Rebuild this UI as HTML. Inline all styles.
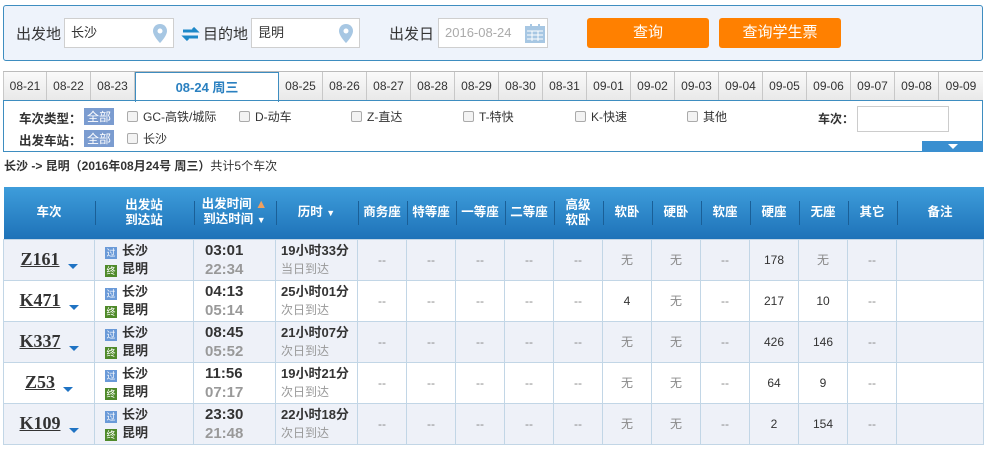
<!DOCTYPE html>
<html><head><meta charset="utf-8"><style>
*{box-sizing:border-box;margin:0;padding:0}
body{width:988px;height:449px;background:#fff;font-family:"Liberation Sans","Noto Sans CJK SC",sans-serif;font-size:12px;color:#333;position:relative;overflow:hidden}
.a{position:absolute}
.top{left:3px;top:5px;width:980px;height:56px;background:#eef3fb;border:1px solid #3e8dc0;border-radius:3px}
.lbl{font-size:15px;color:#333;top:23px}
.inp{top:18px;height:30px;background:#fff;border:1px solid #cfcfcf;font-size:13px;padding:0 6px;line-height:28px}
.btn{top:18px;height:30px;background:#ff8000;border-radius:3px;color:#fff;font-size:15px;text-align:center;line-height:30px}
.tabs{left:3px;top:71px;height:30px;width:980px;border-top:1px solid #bbb}
.tab{position:absolute;top:0;width:44px;height:29px;background:linear-gradient(#fafafa,#e8e8e8);border-right:1px solid #c8c8c8;text-align:center;line-height:29px;font-size:12px;color:#333}
.filt{left:3px;top:100px;width:980px;height:52px;border:1px solid #3e8dc0}
.cb{display:inline-block;width:11px;height:11px;border:1px solid #aaa;border-radius:2px;background:#f3f3f3;vertical-align:-1px;margin-right:5px}
.all{background:#7b9cd0;color:#fff;padding:0 3px;font-size:12px}
table{position:absolute;left:3px;top:187px;width:980px;border-collapse:collapse;table-layout:fixed}
th{height:52px;background:linear-gradient(#3e9ddb,#1e72b8);color:#fff;font-size:12.5px;font-weight:bold;line-height:15px;position:relative}
th .sep{position:absolute;left:0;top:14px;height:24px;width:1px;background:#1a5f97}
td{height:41px;border:1px solid #c2d6e6;text-align:center;font-size:12px;color:#333}
td.g{color:#888}
tr.l td{background:#eef1f8}
.tn{font-family:"Liberation Serif","Noto Serif CJK SC",serif;font-size:18px;font-weight:bold;text-decoration:underline;color:#333}
.dn{display:inline-block;width:0;height:0;border-left:5px solid transparent;border-right:5px solid transparent;border-top:5px solid #1f73c3;margin-left:8px;vertical-align:-4px}
.st{text-align:left;padding-left:10px;font-size:13px;font-weight:bold;line-height:18px}
.ic{display:inline-block;width:12px;height:12px;font-size:9px;line-height:12px;color:#fff;text-align:center;margin-right:5px;vertical-align:-1px;font-style:normal;font-weight:normal}
.tm{font-size:15px;font-weight:bold;line-height:19px;text-align:left;padding-left:11px}
.tm span{color:#999}
.du{text-align:left;padding-left:5px;line-height:18px}
</style></head><body>
<div class="a top"></div>
<div class="a lbl" style="left:16px">出发地</div>
<div class="a inp" style="left:64px;width:110px">长沙<svg class="a" style="right:6px;top:5px" width="14" height="19" viewBox="0 0 14 19"><path d="M7 0C3 0 0 3 0 7c0 5 7 12 7 12s7-7 7-12C14 3 11 0 7 0z" fill="#a7c7e3"/><circle cx="7" cy="7" r="2.5" fill="#fff"/></svg></div>
<svg class="a" style="left:181px;top:27px" width="19" height="14" viewBox="0 0 19 14"><path d="M2 4h13l-3-3M17 10H4l3 3" stroke="#1e88c8" stroke-width="3" fill="none"/></svg>
<div class="a lbl" style="left:203px">目的地</div>
<div class="a inp" style="left:251px;width:109px">昆明<svg class="a" style="right:6px;top:5px" width="14" height="19" viewBox="0 0 14 19"><path d="M7 0C3 0 0 3 0 7c0 5 7 12 7 12s7-7 7-12C14 3 11 0 7 0z" fill="#a7c7e3"/><circle cx="7" cy="7" r="2.5" fill="#fff"/></svg></div>
<div class="a lbl" style="left:389px">出发日</div>
<div class="a inp" style="left:438px;width:110px;color:#aaa">2016-08-24<svg class="a" style="right:2px;top:5px" width="20" height="19" viewBox="0 0 20 19"><rect x="0" y="2" width="20" height="17" fill="#a7c7e3"/><rect x="5" y="0" width="2" height="4" fill="#a7c7e3"/><rect x="13" y="0" width="2" height="4" fill="#a7c7e3"/><path d="M2 7h16M2 11h16M2 15h16M7 7v10M13 7v10" stroke="#fff" stroke-width="1"/></svg></div>
<div class="a btn" style="left:587px;width:122px">查询</div>
<div class="a btn" style="left:719px;width:122px">查询学生票</div>

<div class="a tabs">
<div class="tab" style="left:0;border-left:1px solid #c8c8c8">08-21</div>
<div class="tab" style="left:44px">08-22</div>
<div class="tab" style="left:88px">08-23</div>
<div class="tab" style="left:132px;width:144px;height:30px;background:#fff;border:1px solid #3e8dc0;border-bottom:none;color:#2a80c0;font-weight:bold;font-size:13px">08-24 周三</div>
<div class="tab" style="left:276px">08-25</div><div class="tab" style="left:320px">08-26</div><div class="tab" style="left:364px">08-27</div><div class="tab" style="left:408px">08-28</div><div class="tab" style="left:452px">08-29</div><div class="tab" style="left:496px">08-30</div><div class="tab" style="left:540px">08-31</div><div class="tab" style="left:584px">09-01</div><div class="tab" style="left:628px">09-02</div><div class="tab" style="left:672px">09-03</div><div class="tab" style="left:716px">09-04</div><div class="tab" style="left:760px">09-05</div><div class="tab" style="left:804px">09-06</div><div class="tab" style="left:848px">09-07</div><div class="tab" style="left:892px">09-08</div><div class="tab" style="left:936px;width:44px;border-right:none">09-09</div>
</div>
<div class="a filt"></div>
<div class="a" style="left:922px;top:141px;width:61px;height:11px;background:#3a8fd0"><div style="margin:3px auto 0;width:0;height:0;border-left:5px solid transparent;border-right:5px solid transparent;border-top:5px solid #fff"></div></div>
<div class="a" style="left:19px;top:108px;font-weight:bold;font-size:12.5px">车次类型：</div>
<div class="a all" style="left:84px;top:108px">全部</div>
<div class="a" style="left:127px;top:108px"><i class="cb"></i>GC-高铁/城际</div>
<div class="a" style="left:239px;top:108px"><i class="cb"></i>D-动车</div>
<div class="a" style="left:351px;top:108px"><i class="cb"></i>Z-直达</div>
<div class="a" style="left:463px;top:108px"><i class="cb"></i>T-特快</div>
<div class="a" style="left:575px;top:108px"><i class="cb"></i>K-快速</div>
<div class="a" style="left:687px;top:108px"><i class="cb"></i>其他</div>
<div class="a" style="left:818px;top:110px;font-weight:bold">车次：</div>
<div class="a" style="left:857px;top:106px;width:92px;height:26px;border:1px solid #ccc;background:#fff"></div>
<div class="a" style="left:19px;top:130px;font-weight:bold;font-size:12.5px">出发车站：</div>
<div class="a all" style="left:84px;top:130px">全部</div>
<div class="a" style="left:127px;top:130px"><i class="cb"></i>长沙</div>
<div class="a" style="left:4px;top:157px;font-size:12px"><b>长沙 -&gt; 昆明（2016年08月24号 周三）</b>共计5个车次</div>

<table>
<colgroup><col style="width:91px"><col style="width:99px"><col style="width:82px"><col style="width:82px"><col style="width:49px"><col style="width:49px"><col style="width:49px"><col style="width:49px"><col style="width:49px"><col style="width:49px"><col style="width:49px"><col style="width:49px"><col style="width:49px"><col style="width:49px"><col style="width:49px"><col style="width:87px"></colgroup>
<tr><th>车次</th><th><i class="sep"></i>出发站<br>到达站</th><th><i class="sep"></i>出发时间 <span style="color:#f0a060">▲</span><br>到达时间 <span style="font-size:9px">▼</span></th><th><i class="sep"></i>历时 <span style="font-size:9px">▼</span></th><th><i class="sep"></i>商务座</th><th><i class="sep"></i>特等座</th><th><i class="sep"></i>一等座</th><th><i class="sep"></i>二等座</th><th><i class="sep"></i>高级<br>软卧</th><th><i class="sep"></i>软卧</th><th><i class="sep"></i>硬卧</th><th><i class="sep"></i>软座</th><th><i class="sep"></i>硬座</th><th><i class="sep"></i>无座</th><th><i class="sep"></i>其它</th><th><i class="sep"></i>备注</th></tr>
<tr class="l"><td><span class="tn">Z161</span><i class="dn"></i></td><td class="st"><i class="ic" style="background:#6a9ad8">过</i>长沙<br><i class="ic" style="background:#4f8a2a">终</i>昆明</td><td class="tm">03:01<br><span>22:34</span></td><td class="du"><b style="font-size:13px">19小时33分</b><br><span style="color:#999">当日到达</span></td><td class="g">--</td><td class="g">--</td><td class="g">--</td><td class="g">--</td><td class="g">--</td><td class="g">无</td><td class="g">无</td><td class="g">--</td><td>178</td><td class="g">无</td><td class="g">--</td><td></td></tr>
<tr><td><span class="tn">K471</span><i class="dn"></i></td><td class="st"><i class="ic" style="background:#6a9ad8">过</i>长沙<br><i class="ic" style="background:#4f8a2a">终</i>昆明</td><td class="tm">04:13<br><span>05:14</span></td><td class="du"><b style="font-size:13px">25小时01分</b><br><span style="color:#999">次日到达</span></td><td class="g">--</td><td class="g">--</td><td class="g">--</td><td class="g">--</td><td class="g">--</td><td>4</td><td class="g">无</td><td class="g">--</td><td>217</td><td>10</td><td class="g">--</td><td></td></tr>
<tr class="l"><td><span class="tn">K337</span><i class="dn"></i></td><td class="st"><i class="ic" style="background:#6a9ad8">过</i>长沙<br><i class="ic" style="background:#4f8a2a">终</i>昆明</td><td class="tm">08:45<br><span>05:52</span></td><td class="du"><b style="font-size:13px">21小时07分</b><br><span style="color:#999">次日到达</span></td><td class="g">--</td><td class="g">--</td><td class="g">--</td><td class="g">--</td><td class="g">--</td><td class="g">无</td><td class="g">无</td><td class="g">--</td><td>426</td><td>146</td><td class="g">--</td><td></td></tr>
<tr><td><span class="tn">Z53</span><i class="dn"></i></td><td class="st"><i class="ic" style="background:#6a9ad8">过</i>长沙<br><i class="ic" style="background:#4f8a2a">终</i>昆明</td><td class="tm">11:56<br><span>07:17</span></td><td class="du"><b style="font-size:13px">19小时21分</b><br><span style="color:#999">次日到达</span></td><td class="g">--</td><td class="g">--</td><td class="g">--</td><td class="g">--</td><td class="g">--</td><td class="g">无</td><td class="g">无</td><td class="g">--</td><td>64</td><td>9</td><td class="g">--</td><td></td></tr>
<tr class="l"><td><span class="tn">K109</span><i class="dn"></i></td><td class="st"><i class="ic" style="background:#6a9ad8">过</i>长沙<br><i class="ic" style="background:#4f8a2a">终</i>昆明</td><td class="tm">23:30<br><span>21:48</span></td><td class="du"><b style="font-size:13px">22小时18分</b><br><span style="color:#999">次日到达</span></td><td class="g">--</td><td class="g">--</td><td class="g">--</td><td class="g">--</td><td class="g">--</td><td class="g">无</td><td class="g">无</td><td class="g">--</td><td>2</td><td>154</td><td class="g">--</td><td></td></tr>
</table>
</body></html>
